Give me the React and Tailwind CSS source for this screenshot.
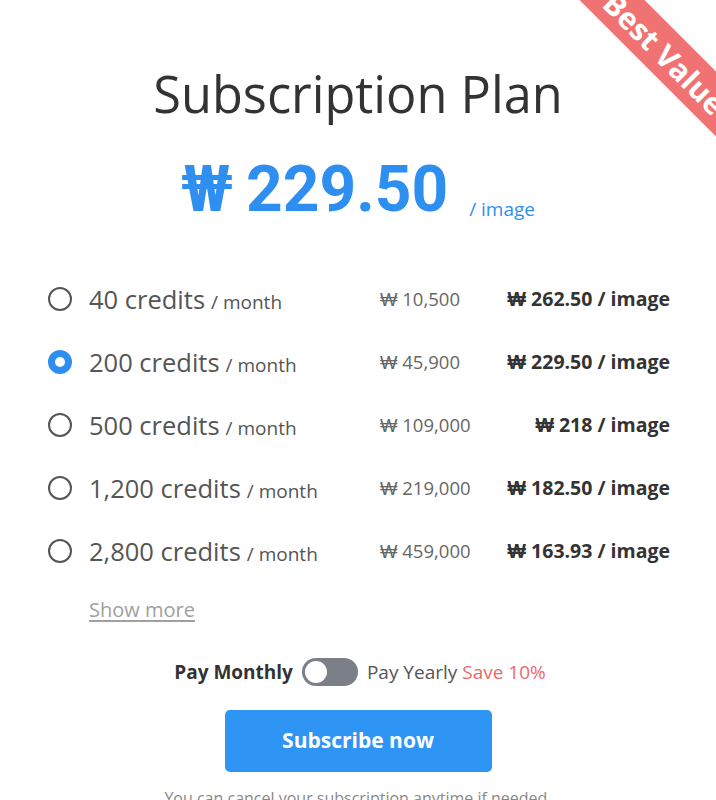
import { useState } from 'react'

const PLANS = [
  { credits: '40', total: '10,500', per: '262.50' },
  { credits: '200', total: '45,900', per: '229.50' },
  { credits: '500', total: '109,000', per: '218' },
  { credits: '1,200', total: '219,000', per: '182.50' },
  { credits: '2,800', total: '459,000', per: '163.93' },
]

export default function App() {
  const [selected, setSelected] = useState(1)
  const [yearly, setYearly] = useState(false)

  return (
    <div className="relative h-[800px] w-[716px] overflow-hidden bg-white font-['Open_Sans',sans-serif] text-[#444]">
      {/* ribbon */}
      <div className="absolute left-[540px] top-[30px] flex h-[46px] w-[250px] rotate-45 items-center justify-center bg-[#f07272] text-[30px] font-bold text-white">
        Best Value
      </div>

      <h1 className="pt-[58px] text-center text-[50.5px] font-normal leading-[72px] text-[#333]">Subscription Plan</h1>

      <div className="mt-[24px] flex items-end justify-center text-[#2f8ff0]">
        <span className="font-['Roboto',sans-serif] text-[64px] font-bold leading-[72px]">
          ₩<span className="ml-[13px]">229.50</span>
        </span>
        <span className="mb-[3px] ml-[21px] text-[19px]">/ image</span>
      </div>

      <div className="mt-[54px] flex flex-col gap-[25px] pl-[48px] pr-[46px]">
        {PLANS.map((plan, i) => (
          <button
            key={plan.credits}
            type="button"
            onClick={() => setSelected(i)}
            className="flex h-[38px] items-center text-left"
          >
            <span
              className={`size-[24px] shrink-0 rounded-full ${
                selected === i ? 'border-[7px] border-[#2f8ff0]' : 'border-2 border-[#555]'
              }`}
            />
            <span className="ml-[17px] w-[291px]">
              <span className="text-[25.5px] text-[#555]">{plan.credits} credits</span>
              <span className="ml-[6px] text-[19px] text-[#555]">/ month</span>
            </span>
            <span className="w-[118px] text-[18.5px] text-[#666]">₩ {plan.total}</span>
            <span className="flex-1 text-right text-[19.5px] font-bold text-[#333]">₩ {plan.per} / image</span>
          </button>
        ))}
      </div>

      <div className="mt-[25px] pl-[89px]">
        <a className="text-[20px] text-[#a0a0a0] underline underline-offset-[3px]" href="#">
          Show more
        </a>
      </div>

      <div className="mt-[33px] flex items-center justify-center gap-[9px] pl-[4px] text-[19px]">
        <span className="font-bold text-[#333]">Pay Monthly</span>
        <button
          type="button"
          onClick={() => setYearly(!yearly)}
          className={`flex h-[28px] w-[56px] items-center rounded-full bg-[#7b7f88] p-[3px] ${yearly ? 'justify-end' : ''}`}
        >
          <span className="size-[22px] rounded-full bg-white" />
        </button>
        <span className="text-[#555]">
          Pay Yearly <span className="text-[#ea6a6a]">Save 10%</span>
        </span>
      </div>

      <div className="mt-[23px] flex justify-center">
        <button
          type="button"
          className="h-[62px] w-[267px] rounded-[5px] bg-[#2f95f5] text-[21px] font-bold text-white"
        >
          Subscribe now
        </button>
      </div>

      <p className="mt-[14px] text-center text-[16px] text-[#888]">
        You can cancel your subscription anytime if needed.
      </p>
    </div>
  )
}
